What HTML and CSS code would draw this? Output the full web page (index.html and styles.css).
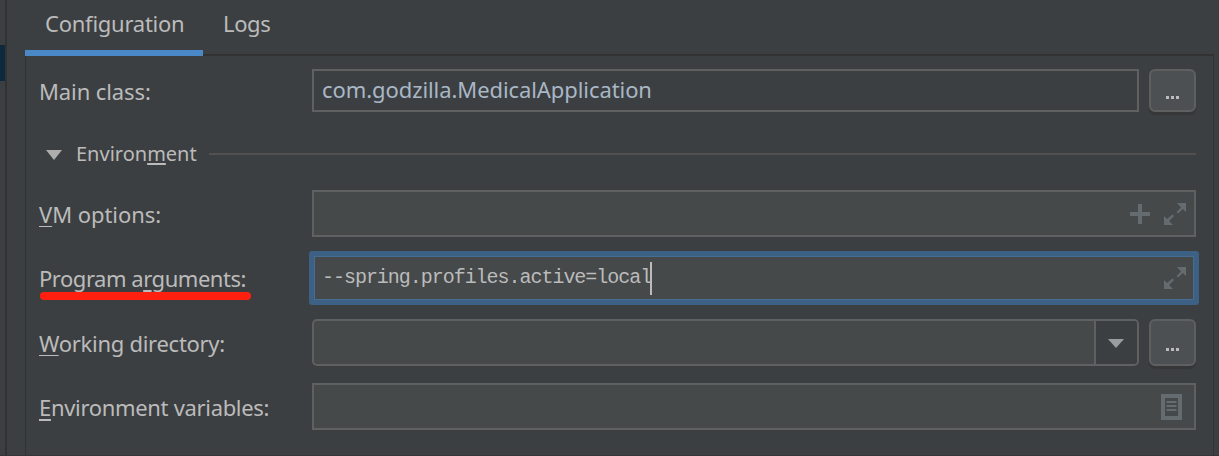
FILE: index.html
```html
<!DOCTYPE html>
<html lang="en">
<head>
<meta charset="utf-8">
<title>Run Configuration</title>
<link rel="stylesheet" href="styles.css">
</head>
<body>
<div class="window">
  <aside class="sidebar"><div class="selected-row"></div></aside>
  <main class="editor">
    <nav class="tabs">
      <span class="tab active"><span class="t-config">Configuration</span></span>
      <span class="tab"><span class="t-logs">Logs</span></span>
    </nav>
    <section class="panel">
      <div class="row main-class">
        <span class="label t-main">Main class:</span>
        <div class="field plain"><span class="class-name">com.godzilla.MedicalApplication</span></div>
        <button class="browse"><i></i><i></i><i></i></button>
      </div>
      <div class="section-title">
        <svg class="arrow" width="16" height="10" viewBox="0 0 16 10"><path d="M0 0h16L8 10z"/></svg>
        <span class="t-env">Environ<span class="key">m</span>ent</span>
        <span class="rule"></span>
      </div>
      <div class="row vm">
        <span class="label t-vm"><span class="key thin">V</span>M options:</span>
        <div class="field">
          <svg class="plus" width="20" height="20" viewBox="0 0 20 20"><path d="M8 0h4v8h8v4h-8v8H8v-8H0V8h8z"/></svg>
          <svg class="expand" width="22" height="22" viewBox="0 0 22 22"><path d="M13 0h9v9l-3-3-5 4.500-1.500-1.500L17 4.500zM0 13l3 3 5.500-4.500L10 13l-5 5 4 4H0z"/></svg>
        </div>
      </div>
      <div class="row args">
        <span class="label t-args">Program a<span class="key">r</span>guments:<span class="marker"></span></span>
        <div class="field focused"><span class="mono">--spring.profiles.active=local</span><span class="caret"></span>
          <svg class="expand" width="22" height="22" viewBox="0 0 22 22"><path d="M13 0h9v9l-3-3-5 4.500-1.500-1.500L17 4.500zM0 13l3 3 5.500-4.500L10 13l-5 5 4 4H0z"/></svg>
        </div>
      </div>
      <div class="row dir">
        <span class="label t-dir"><span class="key thin">W</span>orking directory:</span>
        <div class="field combo"><span class="drop"><svg class="arrow" width="16" height="9" viewBox="0 0 16 9"><path d="M0 0h16L8 9z"/></svg></span></div>
        <button class="browse"><i></i><i></i><i></i></button>
      </div>
      <div class="row vars">
        <span class="label t-vars"><span class="key">E</span>nvironment variables:</span>
        <div class="field">
          <svg class="doc" width="21" height="26" viewBox="0 0 21 26"><path fill-rule="evenodd" d="M0 0h21v26H0zM4 4v18h13V4zM5.500 7h10v2h-10zM5.500 11h10v2h-10zM5.500 15h10v2h-10z"/></svg>
        </div>
      </div>
    </section>
  </main>
</div>
</body>
</html>
```
FILE: styles.css
```css
* { box-sizing: border-box; }
body {
  margin: 0;
  background: #3c3f41;
  color: #bbbbbb;
  font: 22px/30px "Noto Sans", sans-serif;
  overflow: hidden;
}
.window { display: flex; width: 1219px; height: 456px; border-bottom: 1px solid #353535; }
.sidebar { width: 7px; padding-top: 45px; border-right: 2px solid #323232; flex: none; }
.selected-row { height: 36px; background: #0d293e; }
.editor { flex: 1; padding: 0 5px 0 18px; display: flex; flex-direction: column; }
.tabs { display: flex; height: 56px; border-bottom: 2px solid #323232; }
.tab { height: 56px; padding: 8px 20px 0; white-space: nowrap; }
.tab.active { width: 178px; border-bottom: 6px solid #4a88c7; }
.t-config { letter-spacing: -0.25px; }
.t-logs { letter-spacing: -0.4px; }
.panel {
  flex: 1;
  display: flex;
  flex-direction: column;
  padding: 13px 17px 0 12px;
  border: solid #323232;
  border-width: 0 1px;
}
.row { display: flex; align-items: center; flex: none; }
.label { width: 274px; flex: none; white-space: nowrap; position: relative; padding-left: 1px; }
.t-main { letter-spacing: -0.1px; }
.t-vm { letter-spacing: -0.05px; }
.t-args { letter-spacing: -0.47px; }
.t-dir { letter-spacing: -0.28px; }
.t-vars { letter-spacing: -0.32px; }
.key { text-decoration: underline; text-decoration-thickness: 2px; text-underline-offset: 3px; text-decoration-skip-ink: none; }
.key.thin { text-decoration-thickness: 1px; }
.field {
  flex: 1;
  height: 47px;
  border: 2px solid #5f6161;
  background: #45494a;
  display: flex;
  align-items: center;
  justify-content: flex-end;
  padding-right: 8px;
}
.plain { height: 43px; background: none; justify-content: flex-start; padding: 0 0 3px 8px; color: #a9b7c6; }
.class-name { letter-spacing: -0.08px; }
.browse {
  width: 47px;
  height: 43px;
  margin-left: 10px;
  padding: 14px 0 0;
  border: 2px solid #5e6060;
  border-radius: 6px;
  background: #4c5052;
  box-shadow: 0 3px 1px #353739;
  display: flex;
  align-items: center;
  justify-content: center;
  gap: 2px;
}
.browse i { width: 3px; height: 3px; background: #bbb; }
.section-title { display: flex; align-items: center; height: 30px; margin: 27px 0 21px; padding-left: 8px; font-size: 20px; }
.arrow { fill: #adadad; }
.section-title .arrow { position: relative; top: 1px; }
.section-title .t-env { margin-left: 14px; }
.section-title .key { text-underline-offset: 2px; }
.rule { flex: 1; height: 2px; margin-left: 12px; background: #515151; }
.plus, .expand, .doc { fill: #656c70; flex: none; }
.plus { margin-right: 14px; }
.args { margin-top: 14px; margin-right: -3px; }
.args .label { width: 271px; }
.args .field { height: 54px; border: 5px solid #3d6185; border-radius: 3px; padding: 0 8px; box-shadow: inset 0 0 0 1px #466d94; }
.mono { font: 20px/28px "Liberation Mono", monospace; letter-spacing: -1.03px; color: #bbb; white-space: nowrap; }
.caret { width: 2px; height: 33px; background: #bbb; margin-right: auto; margin-left: -1px; }
.marker { position: absolute; left: 2px; top: 29px; width: 211px; height: 8px; border-radius: 4px; background: #ff2010; }
.dir { margin-top: 14px; }
.dir .browse { height: 47px; }
.combo { border-radius: 5px; padding: 0; }
.drop { width: 43px; height: 43px; padding-right: 1px; border-left: 2px solid #5f6161; border-radius: 0 3px 3px 0; background: #3c3f41; display: flex; align-items: center; justify-content: center; }
.combo .arrow { fill: #9a9da0; position: relative; top: 1px; }
.vars { margin-top: 18px; }
.vars .field { margin-top: -1px; }
.doc { margin-right: 4px; }
```
